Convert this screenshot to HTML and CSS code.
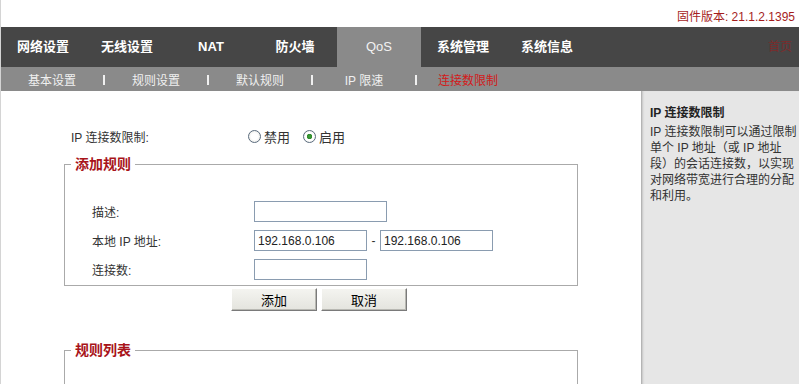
FILE: index.html
```html
<!DOCTYPE html>
<html lang="zh-CN">
<head>
  <meta charset="UTF-8" />
  <meta name="viewport" content="width=device-width, initial-scale=1.0"/>
  <title>QoS - 连接数限制</title>
  <link rel="stylesheet" href="styles.css">
</head>
<body>
  <!-- 顶部版本信息 -->
  <div class="top">
    <span class="version">固件版本: 21.1.2.1395</span>
  </div>

  <!-- 主菜单 -->
  <div class="nav">
    <a href="#">网络设置</a>
    <a href="#">无线设置</a>
    <a href="#">NAT</a>
    <a href="#">防火墙</a>
    <a href="#" class="on">QoS</a>
    <a href="#">系统管理</a>
    <a href="#">系统信息</a>
    <a href="#" class="home">首页</a>
  </div>

  <!-- 子菜单 -->
  <div class="subnav">
    <a href="#">基本设置</a><i></i>
    <a href="#">规则设置</a><i></i>
    <a href="#">默认规则</a><i></i>
    <a href="#">IP 限速</a><i></i>
    <a href="#" class="on">连接数限制</a>
  </div>

  <div class="main">
    <div class="content">
      <div class="switch-row">
        <span class="switch-label">IP 连接数限制:</span>
        <label class="radio"><input type="radio" name="limit"> 禁用</label>
        <label class="radio"><input type="radio" name="limit" checked> 启用</label>
      </div>

      <fieldset class="box">
        <legend>添加规则</legend>
        <div class="form-row">
          <span class="label">描述:</span>
          <input type="text" class="txt wide">
        </div>
        <div class="form-row">
          <span class="label">本地 IP 地址:</span>
          <input type="text" class="txt" value="192.168.0.106">
          <span class="dash">-</span>
          <input type="text" class="txt" value="192.168.0.106">
        </div>
        <div class="form-row">
          <span class="label">连接数:</span>
          <input type="text" class="txt">
        </div>
      </fieldset>

      <div class="buttons">
        <button>添加</button>
        <button>取消</button>
      </div>

      <fieldset class="box list">
        <legend>规则列表</legend>
      </fieldset>
    </div>

    <!-- 帮助说明 -->
    <div class="side">
      <h4>IP 连接数限制</h4>
      <p>IP 连接数限制可以通过限制<br>单个 IP 地址（或 IP 地址<br>段）的会话连接数，以实现<br>对网络带宽进行合理的分配<br>和利用。</p>
    </div>
  </div>
</body>
</html>
```

FILE: styles.css
```css
* {
  box-sizing: border-box;
}

html, body {
  overflow: hidden;
}

body {
  margin: 0;
  border-left: 1px solid #d4d4d4;
  font-family: "Liberation Sans", "Noto Sans CJK SC", sans-serif;
  font-size: 12px;
  color: #333;
  background: #fff;
}

.top {
  height: 27px;
  display: flex;
  justify-content: flex-end;
  align-items: flex-end;
  padding: 0 4px 3px 0;
}

.version {
  color: #a51d1d;
  font-size: 12px;
}

.nav {
  display: flex;
  height: 40px;
  background: #464646;
}

.nav a {
  width: 84px;
  line-height: 40px;
  text-align: center;
  color: #fff;
  font-size: 13px;
  font-weight: bold;
  text-decoration: none;
}

.nav a.on {
  background: #8a8a8a;
  color: #f2f2f2;
  font-weight: normal;
}

.nav a.home {
  width: auto;
  margin-left: auto;
  padding-right: 7px;
  color: #7d2b2b;
  font-weight: normal;
  font-size: 12px;
}

.subnav {
  display: flex;
  align-items: center;
  height: 24px;
  background: #8a8a8a;
}

.subnav a {
  width: 102px;
  text-align: center;
  color: #f0f0f0;
  text-decoration: none;
}

.subnav a.on {
  color: #d21a1a;
}

.subnav i {
  width: 2px;
  height: 10px;
  margin-top: 2px;
  background: #f0f0f0;
}

.main {
  display: flex;
}

.content {
  width: 640px;
  padding: 36px 0 0 0;
}

.switch-row {
  display: flex;
  align-items: center;
  height: 18px;
  padding-left: 70px;
}

.switch-label {
  width: 177px;
}

.radio {
  display: flex;
  align-items: center;
  margin-right: 13px;
  font-size: 13px;
}

.radio input {
  appearance: none;
  width: 13px;
  height: 13px;
  margin: 0 3px 0 0;
  border: 1px solid #5a6b7d;
  border-radius: 50%;
  background: radial-gradient(circle, #ffffff 40%, #e2e2dc 100%);
}

.radio input:checked {
  background: radial-gradient(circle, #3fa03a 0, #2f8a2c 2.5px, #fff 3px, #fff 55%, #e2e2dc 100%);
}

.box {
  width: 514px;
  margin: 9px 0 0 63px;
  padding: 27px 0 5px 0;
  border: 1px solid #aaa;
}

.box legend {
  margin-left: 6px;
  padding: 0 4px;
  color: #a8141a;
  font-size: 14px;
  font-weight: bold;
  line-height: 20px;
}

.form-row {
  display: flex;
  align-items: center;
  height: 21px;
  margin: 0 0 8px 27px;
}

.form-row:last-child {
  margin-bottom: 0;
}

.label {
  width: 162px;
}

.txt {
  width: 113px;
  height: 21px;
  padding: 0 3px;
  border: 1px solid #8a9cb0;
  font-family: "Liberation Sans", sans-serif;
  font-size: 12px;
  color: #222;
}

.txt.wide {
  width: 133px;
}

.dash {
  width: 13px;
  text-align: center;
}

.buttons {
  display: flex;
  justify-content: center;
  gap: 4px;
  width: 514px;
  margin: 2px 0 0 61px;
}

.buttons button {
  width: 86px;
  height: 23px;
  padding: 0;
  background: linear-gradient(#f4f4f0, #e4e4de);
  border: 1px solid;
  border-color: #fff #7a7a7a #7a7a7a #fff;
  box-shadow: inset -1px -1px 0 #b8b8b2;
  font-family: "Liberation Sans", "Noto Sans CJK SC", sans-serif;
  font-size: 13px;
  color: #000;
}

.box.list {
  height: 60px;
  margin-top: 29px;
}

.side {
  flex: 1;
  min-height: 300px;
  padding: 14px 2px 0 8px;
  background: #e6e6e6;
  border-left: 1px solid #b4b4b4;
  box-shadow: inset 2px 0 2px -1px #c4c4c4;
  color: #333;
}

.side h4 {
  margin: 0 0 3px 0;
  line-height: 16px;
  font-size: 12px;
  color: #222;
}

.side p {
  margin: 0;
  line-height: 16px;
}
```
